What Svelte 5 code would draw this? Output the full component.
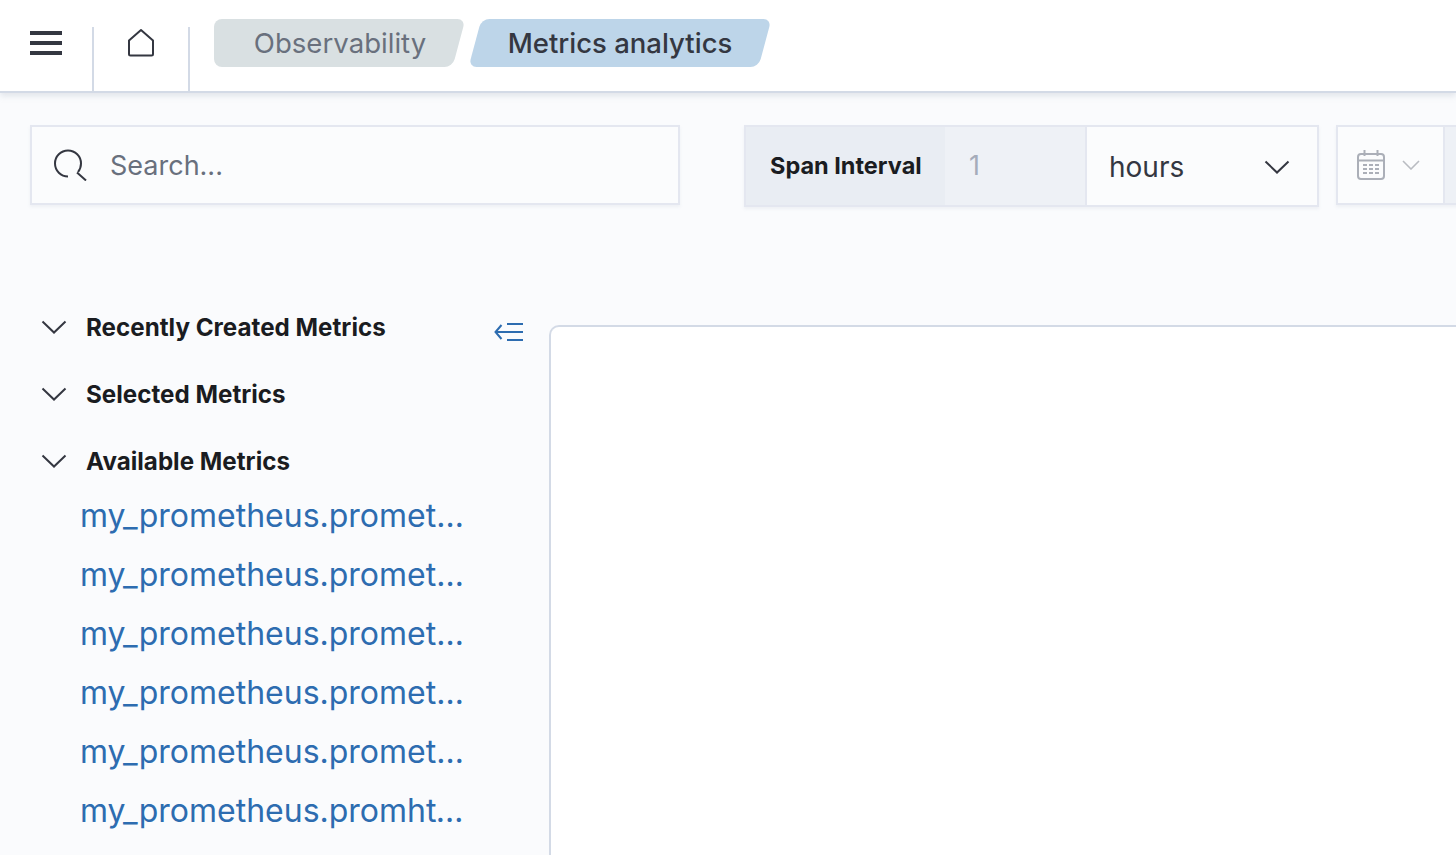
<script>
  const sections = ['Recently Created Metrics', 'Selected Metrics', 'Available Metrics'];
  const metrics = [
    'my_prometheus.prometheus_http_requests_total',
    'my_prometheus.prometheus_http_request_duration',
    'my_prometheus.prometheus_http_response_size',
    'my_prometheus.prometheus_sd_discovered_targets',
    'my_prometheus.prometheus_target_interval_length',
    'my_prometheus.promhttp_metric_handler_requests'
  ];
</script>

<div class="page">
  <header class="topbar">
    <button class="burger" aria-label="menu">
      <span></span><span></span><span></span>
    </button>
    <div class="home">
      <svg width="28" height="30" viewBox="0 0 28 30" fill="none" stroke="#343741" stroke-width="2" stroke-linejoin="round">
        <path d="M2 12.500 14 2l12 10.500V26a1.500 1.500 0 0 1-1.500 1.500h-21A1.500 1.500 0 0 1 2 26z" />
      </svg>
    </div>
    <nav class="crumbs">
      <span class="crumb first">Observability</span>
      <span class="crumb last">Metrics analytics</span>
    </nav>
  </header>

  <section class="controls">
    <label class="search">
      <svg width="34" height="32" viewBox="0 0 34 32" fill="none" stroke="#343741" stroke-width="2">
        <path d="M14 27.500a13 13 0 1 1 13-13c0 3.500-1 6-3 8.500" />
        <path d="M23 23.500 32 31.500" />
      </svg>
      <input placeholder="Search..." />
    </label>

    <div class="span-group">
      <span class="span-label">Span Interval</span>
      <span class="span-num">1</span>
      <div class="span-unit">
        <span>hours</span>
        <svg width="26" height="14" viewBox="0 0 26 14" fill="none" stroke="#343741" stroke-width="2"><path d="M1.500 1.500 13 12.500 24.500 1.500" /></svg>
      </div>
    </div>

    <div class="date-group">
      <div class="date-btn">
        <svg width="28" height="30" viewBox="0 0 28 30" fill="none" stroke="#abafb8" stroke-width="2">
          <rect x="1" y="4" width="26" height="25" rx="3" />
          <path d="M1 10.500h26M7.500 0v6M20.500 0v6" />
          <path d="M6 15h4M12 15h4M18 15h4M6 19h4M12 19h4M18 19h4M6 23h4M12 23h4M18 23h4" stroke-width="2" />
        </svg>
        <svg width="18" height="10" viewBox="0 0 18 10" fill="none" stroke="#b9bcc2" stroke-width="1.600"><path d="M1 1l8 8 8-8" /></svg>
      </div>
    </div>
  </section>

  <main class="content">
    <aside class="sidebar">
      <button class="collapse" aria-label="collapse">
        <svg width="30" height="20" viewBox="0 0 30 20" fill="none" stroke="#2d6cb0" stroke-width="2">
          <path d="M7.500 3 1.500 10l6 7M1.500 10H29M13 2h16M13 18h16" />
        </svg>
      </button>
      {#each sections as title}
        <div class="sec-head">
          <svg width="26" height="14" viewBox="0 0 26 14" fill="none" stroke="#343741" stroke-width="2"><path d="M1.500 1.500 13 12.500 24.500 1.500" /></svg>
          <span>{title}</span>
        </div>
      {/each}
      <ul class="metric-list">
        {#each metrics as m}
          <li>{m}</li>
        {/each}
      </ul>
    </aside>
    <div class="panel"></div>
  </main>
</div>

<style>
  :global(body) {
    margin: 0;
    background: #fafbfd;
    overflow: hidden;
  }

  .page {
    width: 1456px;
    height: 855px;
    overflow: hidden;
    font-family: Inter, "Liberation Sans", sans-serif;
    color: #343741;
  }

  .topbar {
    height: 91px;
    background: #fff;
    display: flex;
    border-bottom: 2px solid #d3dae6;
    box-shadow: 0 3px 6px rgba(152, 162, 179, 0.25);
    position: relative;
  }

  .burger {
    width: 92px;
    flex: none;
    padding: 31px 0 0 30px;
    border: none;
    background: none;
    display: flex;
    flex-direction: column;
    gap: 6px;
    box-sizing: border-box;
  }

  .burger span {
    width: 32px;
    height: 4px;
    background: #343741;
  }

  .home {
    width: 98px;
    flex: none;
    margin-top: 27px;
    border-left: 2px solid #d3dae6;
    border-right: 2px solid #d3dae6;
    box-sizing: border-box;
    padding: 1px 0 0 33px;
  }

  .crumbs {
    display: flex;
    padding: 19px 0 0 24px;
    gap: 16px;
  }

  .crumb {
    height: 48px;
    line-height: 48px;
    box-sizing: border-box;
    text-align: center;
    position: relative;
    isolation: isolate;
    flex: none;
  }

  .crumb::before {
    content: "";
    position: absolute;
    inset: 0;
    z-index: -1;
    border-radius: 8px;
    transform: skewX(-15deg);
  }

  .first {
    width: 245px;
    color: #69707d;
    font-size: 27.6px;
    padding-left: 7px;
  }

  .first::before {
    left: 40px;
    background: #d9e0e2;
  }

  .first::after {
    content: "";
    position: absolute;
    z-index: -1;
    left: 0;
    top: 0;
    width: 60px;
    height: 100%;
    background: #d9e0e2;
    border-radius: 8px 0 0 8px;
  }

  .last {
    width: 290px;
    color: #343741;
    font-size: 27.500px;
    font-weight: 500;
  }

  .last::before {
    background: #bdd5e9;
  }

  .controls {
    display: flex;
    padding: 32px 0 0 30px;
    height: 82px;
  }

  .search {
    width: 650px;
    height: 80px;
    flex: none;
    box-sizing: border-box;
    border: 2px solid #e4e7f0;
    background: #fbfcfd;
    display: flex;
    align-items: center;
    padding-left: 22px;
    gap: 22px;
    box-shadow: 0 2px 3px rgba(152, 162, 179, 0.12);
  }

  .search input {
    border: none;
    background: none;
    outline: none;
    font: 27px Inter, sans-serif;
    width: 500px;
    padding: 0;
  }

  .search input::placeholder {
    color: #69707d;
    opacity: 1;
  }

  .span-group {
    margin-left: 64px;
    width: 575px;
    height: 82px;
    flex: none;
    box-sizing: border-box;
    border: 2px solid #e4e7f0;
    display: flex;
    background: #eef1f6;
    box-shadow: 0 2px 3px rgba(152, 162, 179, 0.12);
  }

  .span-label {
    width: 199px;
    box-sizing: border-box;
    background: #e9edf3;
    font-weight: 700;
    font-size: 23.500px;
    color: #1a1c21;
    padding-left: 24px;
    line-height: 78px;
  }

  .span-num {
    width: 140px;
    box-sizing: border-box;
    padding-left: 24px;
    font-size: 27px;
    color: #a5acba;
    line-height: 78px;
  }

  .span-unit {
    flex: 1;
    background: #fbfcfd;
    border-left: 2px solid #e4e7f0;
    display: flex;
    align-items: center;
    justify-content: space-between;
    padding: 2px 27px 0 22px;
    font-size: 28px;
  }

  .date-group {
    margin-left: 17px;
    width: 140px;
    height: 80px;
    box-sizing: border-box;
    border: 2px solid #e4e7f0;
    background: #eef1f6;
    flex: none;
    box-shadow: 0 2px 3px rgba(152, 162, 179, 0.12);
  }

  .date-btn {
    width: 107px;
    height: 100%;
    background: #fbfcfd;
    border-right: 2px solid #e4e7f0;
    display: flex;
    align-items: center;
    padding-left: 19px;
    gap: 17px;
    box-sizing: border-box;
  }

  .content {
    display: flex;
    padding-top: 85px;
  }

  .sidebar {
    width: 549px;
    flex: none;
    position: relative;
    padding: 2px 0 0 41px;
    box-sizing: border-box;
  }

  .collapse {
    position: absolute;
    left: 494px;
    top: 30px;
    border: none;
    background: none;
    padding: 0;
  }

  .sec-head {
    display: flex;
    align-items: center;
    gap: 19px;
    height: 67px;
    font-weight: 700;
    font-size: 24.200px;
    color: #1a1c21;
  }

  .sec-head svg {
    margin-bottom: 2px;
  }

  .metric-list {
    list-style: none;
    margin: -9px 0 0 39px;
    padding: 0;
  }

  .metric-list li {
    width: 384px;
    height: 59px;
    line-height: 59px;
    font-size: 32px;
    color: #2d6cb0;
    white-space: nowrap;
    overflow: hidden;
    text-overflow: ellipsis;
  }

  .panel {
    flex: 1;
    height: 640px;
    background: #fff;
    border: 2px solid #d3dae6;
    border-right: none;
    border-radius: 10px 0 0 0;
    box-sizing: border-box;
    margin-top: 33px;
  }
</style>
